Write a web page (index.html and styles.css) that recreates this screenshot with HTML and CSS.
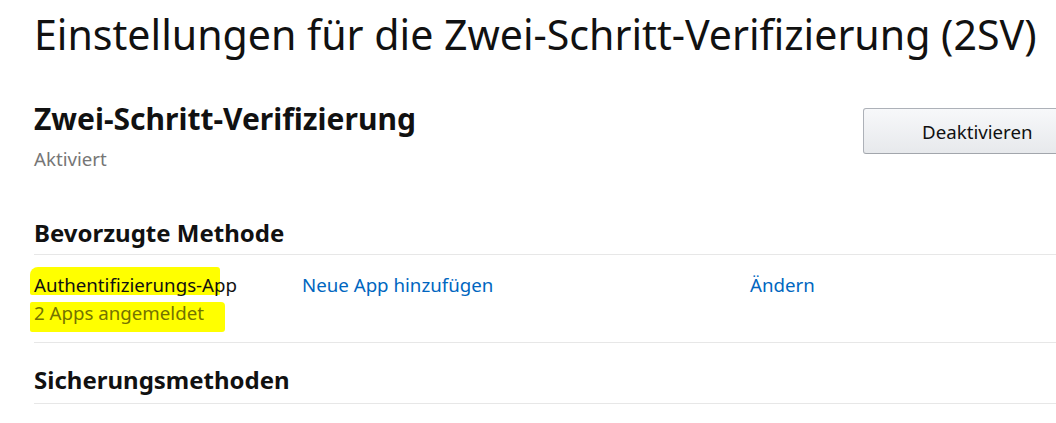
FILE: index.html
```html
<!DOCTYPE html>
<html lang="de">
<head>
<meta charset="utf-8">
<title>2SV</title>
<link rel="stylesheet" href="styles.css">
</head>
<body>
<div class="page">
  <h1 class="title">Einstellungen für die Zwei-Schritt-Verifizierung (2SV)</h1>
  <div class="status-row">
    <div class="status">
      <h2 class="section-title">Zwei-Schritt-Verifizierung</h2>
      <div class="muted">Aktiviert</div>
    </div>
    <button class="btn">Deaktivieren</button>
  </div>
  <h3 class="sub-title preferred">Bevorzugte Methode</h3>
  <div class="method-row">
    <div class="method">
      <span class="hl hl-1">Authentifizierungs-App</span>
      <span class="hl hl-2">2 Apps angemeldet</span>
    </div>
    <a class="link">Neue App hinzufügen</a>
    <a class="link">Ändern</a>
  </div>
  <h3 class="sub-title backup">Sicherungsmethoden</h3>
</div>
</body>
</html>
```
FILE: styles.css
```css
html, body {
  margin: 0;
  padding: 0;
  background: #fff;
  overflow: hidden;
}
body {
  font-family: "Noto Sans", "Open Sans", sans-serif;
  color: #111;
}
.page {
  padding-left: 34px;
  width: 1066px;
}
.title {
  margin: 0;
  padding-top: 8px;
  font-size: 41.1px;
  font-weight: 400;
  line-height: 52px;
  white-space: nowrap;
}
.status-row {
  display: flex;
  justify-content: space-between;
  align-items: flex-start;
  margin-top: 41px;
}
.section-title {
  margin: 0;
  font-size: 30px;
  font-weight: 700;
  line-height: 36px;
}
.muted {
  color: #767676;
  font-size: 18.7px;
  line-height: 24px;
  margin-top: 10px;
}
.btn {
  box-sizing: border-box;
  width: 237px;
  height: 46px;
  margin-top: 7px;
  border: 1px solid #adb1b8;
  border-bottom-color: #a2a6ac;
  border-radius: 3px;
  background: linear-gradient(#f7f8fa, #e7e9ec);
  font-family: inherit;
  font-size: 18.7px;
  color: #111;
  text-align: left;
  padding: 0 0 0 58px;
}
.sub-title {
  margin: 0;
  font-size: 24px;
  font-weight: 700;
  line-height: 30px;
  border-bottom: 1px solid #e7e7e7;
}
.preferred {
  margin-top: 47px;
  padding-bottom: 6px;
}
.method-row {
  display: grid;
  grid-template-columns: 268px 448px 1fr;
  padding: 12px 0 10px;
  border-bottom: 1px solid #e7e7e7;
  font-size: 18.7px;
}
.method {
  display: flex;
  flex-direction: column;
  align-items: flex-start;
}
.hl {
  display: block;
  box-sizing: border-box;
  background: #ffff00;
  white-space: nowrap;
  margin-left: -4px;
  padding-left: 4px;
}
.hl-1 {
  width: 190px;
  height: 28px;
  padding-top: 4px;
  line-height: 28px;
  border-radius: 8px 3px 1px 2px;
}
.hl-2 {
  width: 195px;
  height: 30px;
  margin-top: 7px;
  line-height: 22px;
  color: #737300;
  border-radius: 2px 4px 3px 2px;
}
.link {
  color: #0066c0;
  text-decoration: none;
  padding-top: 4px;
  line-height: 28px;
}
.backup {
  margin-top: 22px;
  padding-bottom: 8px;
}
```
